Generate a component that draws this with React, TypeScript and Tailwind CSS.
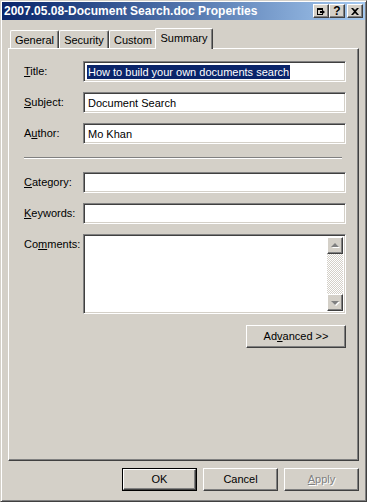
import React from "react";

const raised =
  "border border-t-white border-l-white border-r-[#404040] border-b-[#404040] shadow-[inset_-1px_-1px_#808080]";
const sunken =
  "border border-t-[#808080] border-l-[#808080] border-r-white border-b-white shadow-[inset_1px_1px_#404040,inset_-1px_-1px_#d4d0c8]";

function Label({ pre, k, post }: { pre: string; k: string; post: string }) {
  return (
    <span>
      {pre}
      <u>{k}</u>
      {post}
    </span>
  );
}

function Field({
  label,
  value,
  selected,
}: {
  label: [string, string, string];
  value?: string;
  selected?: boolean;
}) {
  return (
    <div className="flex items-center">
      <div className="w-[59px] leading-[13px]">
        <Label pre={label[0]} k={label[1]} post={label[2]} />
      </div>
      <div className={`${sunken} h-[21px] w-[263px] bg-white`}>
        <div className="flex h-full items-center pl-[3px] pt-px">
          {value && (
            <span
              className={
                selected
                  ? "bg-[#0a246a] pl-px pr-px leading-[14px] text-white"
                  : "pl-px leading-[14px]"
              }
            >
              {value}
            </span>
          )}
        </div>
      </div>
    </div>
  );
}

function ScrollButton({ up }: { up?: boolean }) {
  return (
    <div className={`${raised} flex h-[17px] w-[16px] items-center justify-center bg-[#d4d0c8]`}>
      <svg width="9" height="6" viewBox="0 0 9 6">
        {up ? (
          <>
            <path d="M1 5 L5 1 L9 5 Z" fill="#fff" />
            <path d="M0 4 L4 0 L8 4 Z" fill="#808080" />
          </>
        ) : (
          <>
            <path d="M1 2 L9 2 L5 6 Z" fill="#fff" />
            <path d="M0 1 L8 1 L4 5 Z" fill="#808080" />
          </>
        )}
      </svg>
    </div>
  );
}

function Button({
  children,
  isDefault,
  className = "",
}: {
  children: React.ReactNode;
  isDefault?: boolean;
  className?: string;
}) {
  if (isDefault) {
    return (
      <div className={`border border-black ${className}`}>
        <div className={`${raised} flex h-full w-full items-center justify-center`}>{children}</div>
      </div>
    );
  }
  return <div className={`${raised} flex items-center justify-center ${className}`}>{children}</div>;
}

function Tab({ label, w, selected }: { label: string; w: string; selected?: boolean }) {
  if (selected) {
    return (
      <div
        className={`relative z-10 -mb-px -ml-[2px] flex h-[21px] ${w} items-start justify-center rounded-t-[2px] border-l border-t border-r border-l-white border-t-white border-r-[#404040] bg-[#d4d0c8] pt-[3px] leading-[13px] shadow-[inset_-1px_0_#808080]`}
      >
        {label}
      </div>
    );
  }
  return (
    <div
      className={`flex h-[18px] ${w} items-start justify-center rounded-t-[2px] border-l border-t border-r border-l-white border-t-white border-r-[#404040] pt-[3px] leading-[13px] shadow-[inset_-1px_0_#808080]`}
    >
      {label}
    </div>
  );
}

export default function App() {
  return (
    <div className="h-[502px] w-[367px] font-['Liberation_Sans',Arial,sans-serif] text-[11px] text-black">
      <div className="flex h-full flex-col border border-t-[#d4d0c8] border-l-[#d4d0c8] border-r-[#404040] border-b-[#404040] bg-[#d4d0c8] p-px shadow-[inset_1px_1px_#fff,inset_-1px_-1px_#808080]">
        {/* title bar */}
        <div className="flex h-[18px] items-center bg-linear-to-r from-[#0a246a] to-[#a6caf0] pl-[2px] pr-[2px]">
          <span className="text-[12px] font-bold leading-[14px] text-white">
            2007.05.08-Document Search.doc Properties
          </span>
          <div className="ml-auto flex items-center">
            <div className={`${raised} flex h-[14px] w-[16px] items-center justify-center bg-[#d4d0c8]`}>
              <svg width="8" height="7" viewBox="0 0 8 7">
                <path d="M0 0 H6 V2 H1 V6 H6 V7 H0 Z" fill="#000" />
                <path d="M3 3 H5 V1.5 L8 4 L5 6.5 V5 H3 Z" fill="#000" />
              </svg>
            </div>
            <div className={`${raised} flex h-[14px] w-[16px] items-center justify-center bg-[#d4d0c8]`}>
              <span className="text-[12px] font-bold leading-[12px]">?</span>
            </div>
            <div className={`${raised} ml-[2px] flex h-[14px] w-[16px] items-center justify-center bg-[#d4d0c8]`}>
              <svg width="8" height="7" viewBox="0 0 8 7">
                <path d="M0 0 H2 L4 2 L6 0 H8 L5 3.5 L8 7 H6 L4 5 L2 7 H0 L3 3.5 Z" fill="#000" />
              </svg>
            </div>
          </div>
        </div>

        <div className="flex flex-1 flex-col px-[6px] pt-[8px]">
          {/* tabs */}
          <div className="flex h-[20px] items-end pl-[2px]">
            <Tab label="General" w="w-[49px]" />
            <Tab label="Security" w="w-[50px]" />
            <Tab label="Custom" w="w-[48px]" />
            <Tab label="Summary" w="w-[58px]" selected />
          </div>

          {/* panel */}
          <div className="flex h-[413px] flex-col border border-t-white border-l-white border-r-[#404040] border-b-[#404040] pl-[15px] pt-[12px] shadow-[inset_-1px_-1px_#808080]">
            <div className="flex flex-col gap-[10px]">
              <Field label={["", "T", "itle:"]} value="How to build your own documents search" selected />
              <Field label={["", "S", "ubject:"]} value="Document Search" />
              <Field label={["A", "u", "thor:"]} value="Mo Khan" />
            </div>

            <div className="mt-[13px] h-[2px] w-[318px] border-t border-b border-t-[#808080] border-b-white" />

            <div className="mt-[13px] flex flex-col gap-[10px]">
              <Field label={["", "C", "ategory:"]} />
              <Field label={["", "K", "eywords:"]} />
              <div className="flex items-start">
                <div className="w-[59px] pt-[4px] leading-[13px]">
                  <Label pre="Co" k="m" post="ments:" />
                </div>
                <div className={`${sunken} flex h-[80px] w-[263px] bg-white p-[2px]`}>
                  <div className="flex-1" />
                  <div className="flex w-[16px] flex-col">
                    <ScrollButton up />
                    <div className="flex-1 bg-[repeating-conic-gradient(#ffffff_0_25%,#d4d0c8_0_50%)] bg-[length:2px_2px]" />
                    <ScrollButton />
                  </div>
                </div>
              </div>
            </div>

            <div className="mt-[11px] flex pl-[222px]">
              <Button className="h-[23px] w-[100px]">
                <span>
                  Ad<u>v</u>anced &gt;&gt;
                </span>
              </Button>
            </div>
          </div>

          {/* bottom buttons */}
          <div className="mt-[7px] flex justify-end gap-[6px]">
            <Button isDefault className="h-[23px] w-[75px]">
              OK
            </Button>
            <Button className="h-[23px] w-[75px]">Cancel</Button>
            <Button className="h-[23px] w-[75px]">
              <span className="text-[#808080] [text-shadow:1px_1px_#fff]">
                <u>A</u>pply
              </span>
            </Button>
          </div>
        </div>
      </div>
    </div>
  );
}
